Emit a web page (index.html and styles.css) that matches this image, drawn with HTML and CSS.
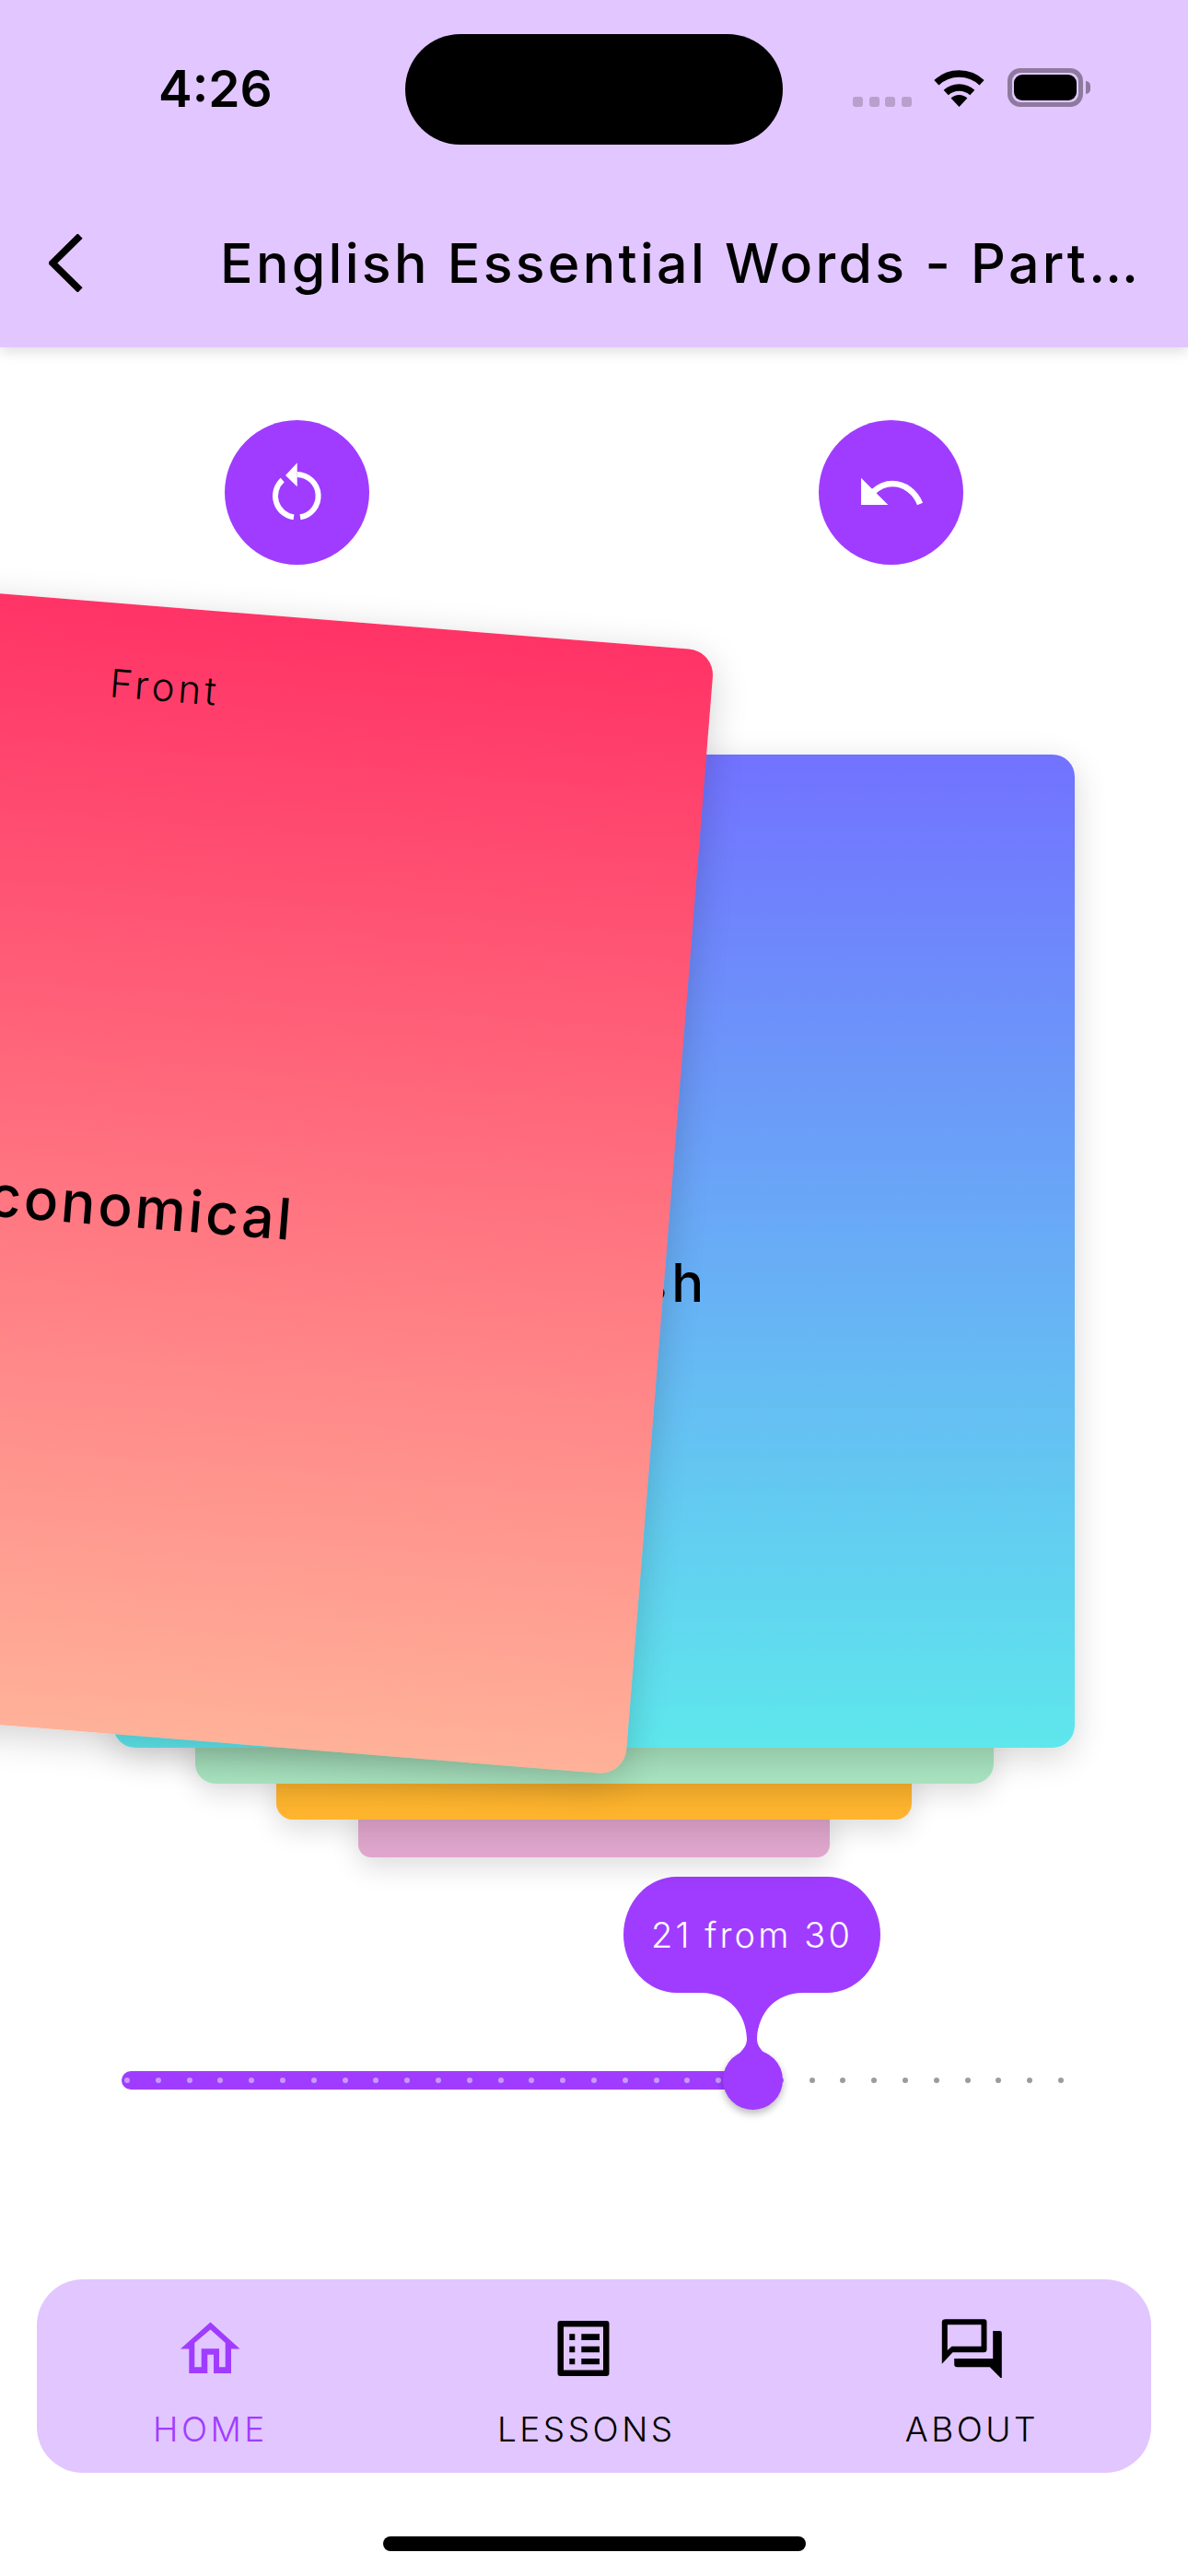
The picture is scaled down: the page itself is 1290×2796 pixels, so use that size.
FILE: index.html
```html
<!DOCTYPE html>
<html lang="en">
<head>
<meta charset="utf-8">
<title>English Essential Words</title>
<link rel="stylesheet" href="styles.css">
</head>
<body>
<div class="phone">
  <header class="header">
    <div class="status">
      <span class="time">4:26</span>
      <div class="island"></div>
      <div class="status-icons">
        <div class="signal"><i></i><i></i><i></i><i></i></div>
        <svg class="wifi" viewBox="0 0 55 40" width="55" height="40"><path d="M2.9 13.7A36 36 0 0 1 52.1 13.7" fill="none" stroke="#000" stroke-width="7.5"/><path d="M13.2 24.6A21 21 0 0 1 41.8 24.6" fill="none" stroke="#000" stroke-width="7.5"/><path d="M27.5 40L18.6 30.5A13 13 0 0 1 36.4 30.5Z" fill="#000"/></svg>
        <div class="battery"><div class="battery-fill"></div></div>
        <div class="battery-nub"></div>
      </div>
    </div>
    <div class="nav">
      <svg class="back" viewBox="0 0 37 63" width="37" height="63"><path d="M34 2L4 31.5L34 61" fill="none" stroke="#000" stroke-width="7.5"/></svg>
      <h1 class="title">English Essential Words - Part…</h1>
    </div>
  </header>

  <div class="actions">
    <button class="round-btn">
      <svg viewBox="0 0 157 157" width="157" height="157"><path d="M78.7 59A23.3 23.3 0 0 1 82 105.3M75 105.4A23.3 23.3 0 0 1 62.7 65" fill="none" stroke="#fff" stroke-width="6"/><path d="M66 60L78.7 46.3V72.3Z" fill="#fff"/></svg>
    </button>
    <button class="round-btn">
      <svg viewBox="0 0 157 157" width="157" height="157"><path d="M46 62.7V92H75.3Z" fill="#fff"/><path d="M59 78C66 71.500 73 69 80 69C93 69 105 78 110 91" fill="none" stroke="#fff" stroke-width="6.500"/></svg>
    </button>
  </div>

  <section class="deck">
    <article class="card card-blue">
      <span class="card-label">Front</span>
      <span class="card-word">English</span>
    </article>
    <div class="peek peek-green"></div>
    <div class="peek peek-orange"></div>
    <div class="peek peek-pink"></div>
    <article class="card-top">
      <span class="card-top-label">Front</span>
      <span class="card-top-word">Economical</span>
    </article>
  </section>

  <section class="slider">
    <div class="track">
      <div class="track-fill"></div>
      <div class="dots">
        <i class="on"></i><i class="on"></i><i class="on"></i><i class="on"></i><i class="on"></i><i class="on"></i><i class="on"></i><i class="on"></i><i class="on"></i><i class="on"></i><i class="on"></i><i class="on"></i><i class="on"></i><i class="on"></i><i class="on"></i><i class="on"></i><i class="on"></i><i class="on"></i><i class="on"></i><i class="on"></i><i class="on"></i><i></i><i></i><i></i><i></i><i></i><i></i><i></i><i></i><i></i><i></i>
      </div>
    </div>
    <div class="thumb"></div>
    <div class="bubble">
      <svg viewBox="0 0 279 253" width="279" height="253"><path d="M58 0H221A58 63 0 0 1 221 126H195C165 126 146 148 145 176C145 184 150 188 155 194H124C129 188 134 184 134 176C133 148 114 126 84 126H58A58 63 0 0 1 58 0Z" fill="#a03cff"/></svg>
      <span class="bubble-text">21 from 30</span>
    </div>
  </section>

  <nav class="tabs">
    <a class="tab tab-active">
      <svg class="tab-icon" viewBox="0 0 92 66" width="92" height="66"><path fill-rule="evenodd" fill="#a03cff" d="M46.500 5.500L78.500 34.500H69V61H50V40.700H43.300V61H23.300V34.500H14ZM46.500 13.500L29.300 28V54.300H36.700V34.300H56V54.300H62.700V28Z"/></svg>
      <span class="tab-label">HOME</span>
    </a>
    <a class="tab">
      <svg class="tab-icon" viewBox="2 0 92 66" width="92" height="66"><path fill-rule="evenodd" d="M19.500 4H69.500Q72.500 4 72.500 7V61Q72.500 64 69.500 64H19.500Q16.500 64 16.500 61V7Q16.500 4 19.500 4ZM23 10.500V57.500H66V10.500Z"/><path d="M29.300 18.300H35.300V25H29.300ZM42.300 18.300H62V25H42.300ZM29.300 31.700H35.300V38.300H29.300ZM42.300 31.700H62V38.300H42.300ZM29.300 45H35.300V51.300H29.300ZM42.300 45H62V51.300H42.300Z"/></svg>
      <span class="tab-label">LESSONS</span>
    </a>
    <a class="tab">
      <svg class="tab-icon" viewBox="1.500 0 92 66" width="92" height="66"><path fill-rule="evenodd" d="M19.300 2.300H61Q64 2.300 64 5.300V35.300Q64 38.300 61 38.300H27L15.300 50.700V5.300Q15.300 2.300 19.300 2.300ZM21.300 8.300V36L26 31.700H58V8.300Z"/><path d="M70.700 15H78.300Q80.300 15 80.300 17V67.300L67.300 54.300H31.700Q28.700 54.300 28.700 51.300V45H70.700Z"/></svg>
      <span class="tab-label">ABOUT</span>
    </a>
  </nav>

  <div class="home-indicator"></div>
</div>
</body>
</html>
```

FILE: styles.css
```css
* { box-sizing: border-box; }
html, body { margin: 0; padding: 0; background: #fff; }
body { font-family: Inter, "Liberation Sans", sans-serif; color: #000; }

.phone { width: 1290px; height: 2796px; overflow: hidden; display: flex; flex-direction: column; }

.header { height: 377px; background: #e2c6ff; padding-top: 37px; box-shadow: 0 4px 14px rgba(0,0,0,.14); position: relative; z-index: 5; }
.status { display: flex; align-items: center; height: 120px; padding-left: 172px; }
.time { width: 268px; font-size: 55px; font-weight: 600; line-height: 1; margin-top: -2px; }
.island { width: 410px; height: 120px; border-radius: 60px; background: #000; }
.status-icons { margin-left: 76px; display: flex; align-items: flex-end; height: 42px; margin-top: -4px; }
.signal { display: flex; gap: 6.500px; margin-right: 24px; }
.signal i { width: 11px; height: 11px; border-radius: 3px; background: #b9a0cc; }
.wifi { display: block; margin-right: 25px; }
.battery { width: 82px; height: 42px; border: 5px solid #8f7a9f; border-radius: 14px; padding: 2px; }
.battery-fill { width: 100%; height: 100%; background: #000; border-radius: 9px; }
.battery-nub { width: 5px; height: 14px; background: #8f7a9f; border-radius: 0 7px 7px 0; margin: 0 0 14px 3px; }

.nav { display: flex; align-items: center; margin-top: 97px; padding-left: 53px; height: 63px; gap: 149px; }
.back { display: block; flex: none; }
.title { margin: 0; font-size: 59px; font-weight: 500; white-space: nowrap; line-height: 63px; letter-spacing: 3.300px; }

.actions { display: flex; gap: 488px; padding-left: 244px; margin-top: 79px; }
.round-btn { width: 157px; height: 157px; border: 0; padding: 0; border-radius: 50%; background: #a03cff; }
.round-btn svg { display: block; }

.deck { position: relative; width: 1044px; margin: 206px 0 0 123px; display: flex; flex-direction: column; align-items: center; }
.card { width: 1044px; height: 1078px; border-radius: 24px; background: linear-gradient(180deg, #7272ff 0%, #5ee7ec 100%); box-shadow: 0 10px 36px rgba(0,0,0,.16); position: relative; z-index: 4; display: flex; flex-direction: column; align-items: center; padding-top: 52px; }
.card-label { font-size: 36px; line-height: 52px; letter-spacing: 3px; font-weight: 300; }
.card-word { font-size: 58px; line-height: 70px; margin: 434px 0 0 12px; font-weight: 500; letter-spacing: 5px; }
.peek { position: relative; height: 63px; margin-top: -24px; box-shadow: 0 10px 30px rgba(0,0,0,.14); }
.peek-green { width: 867px; background: #a8e3bf; border-radius: 0 0 22px 22px; z-index: 3; }
.peek-orange { width: 690px; height: 60px; margin-top: -21px; background: #ffb52e; border-radius: 0 0 18px 18px; z-index: 2; }
.peek-pink { width: 512px; height: 59px; margin-top: -18px; background: #e0a6cd; border-radius: 0 0 14px 14px; z-index: 1; }

.card-top { position: absolute; left: -586px; top: -162px; width: 1192px; height: 1224px; border-radius: 28px; background: linear-gradient(180deg, #ff3366 0%, #ffb199 100%); box-shadow: 0 10px 40px rgba(0,0,0,.18); transform: rotate(4.6deg); z-index: 6; display: flex; flex-direction: column; align-items: center; padding-top: 57px; }
.card-top-label { font-size: 42px; line-height: 60px; margin-left: 8px; letter-spacing: 4px; font-weight: 300; }
.card-top-word { font-size: 62px; line-height: 80px; margin: 495px 0 0 7px; font-weight: 500; letter-spacing: 3px; }

.slider { position: relative; margin: 21px 0 0 132px; width: 1026px; height: 253px; flex: none; }
.track { position: absolute; left: 0; right: 0; top: 211px; height: 20px; }
.track-fill { position: absolute; left: 0; top: 0; bottom: 0; width: 660px; background: #a03cff; border-radius: 10px 0 0 10px; }
.dots { position: absolute; left: 3px; right: 3px; top: 7px; display: flex; justify-content: space-between; }
.dots i { width: 6px; height: 6px; border-radius: 50%; background: #9c9c9c; }
.dots i.on { background: #c898ff; }
.thumb { position: absolute; left: 653px; top: 188px; width: 65px; height: 65px; border-radius: 50%; background: #a03cff; box-shadow: 0 4px 8px rgba(0,0,0,.28); }
.bubble { position: absolute; left: 545px; top: 0; width: 279px; height: 253px; }
.bubble svg { display: block; position: absolute; left: 0; top: 0; }
.bubble-text { position: absolute; left: 0; right: 0; top: 38px; text-align: center; color: #fff; font-size: 38px; line-height: 50px; font-weight: 300; letter-spacing: 3.100px; }

.tabs { margin: 184px 0 0 40px; width: 1210px; height: 210px; background: #e2c6ff; border-radius: 50px; display: flex; justify-content: space-between; padding: 0 122px 0 126px; flex: none; }
.tab { display: flex; flex-direction: column; align-items: center; padding-top: 41px; }
.tab-icon { display: block; flex: none; }
.tab-label { font-size: 37px; line-height: 46px; margin-top: 33px; letter-spacing: 3.500px; font-weight: 300; white-space: nowrap; }
.tab-active .tab-label { color: #a03cff; }

.home-indicator { width: 459px; height: 16px; border-radius: 8px; background: #000; margin: 69px 0 0 416px; flex: none; }
```
